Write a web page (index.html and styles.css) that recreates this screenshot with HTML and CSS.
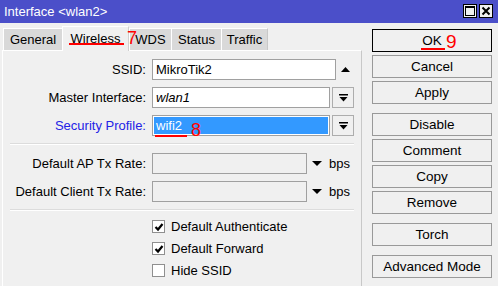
FILE: index.html
```html
<!DOCTYPE html>
<html>
<head>
<meta charset="utf-8">
<link rel="stylesheet" href="styles.css">
</head>
<body>
<div class="window">
  <div class="titlebar">
    <span class="title">Interface &lt;wlan2&gt;</span>
    <div class="winbtns">
      <span class="wbtn"><svg width="12" height="12" viewBox="0 0 12 12"><rect x="1.5" y="1.5" width="9" height="9" fill="none" stroke="#000" stroke-width="1"/><rect x="1" y="1" width="10" height="2" fill="#000"/></svg></span>
      <span class="wbtn"><svg width="12" height="12" viewBox="0 0 12 12"><path d="M2.5 2.5 L9.5 9.5 M9.5 2.5 L2.5 9.5" stroke="#000" stroke-width="2"/></svg></span>
    </div>
  </div>
  <div class="main">
    <div class="left">
      <div class="tabs">
        <div class="tab t-general">General</div>
        <div class="tab active t-wireless">Wireless</div>
        <div class="tab t-wds">WDS</div>
        <div class="tab t-status">Status</div>
        <div class="tab t-traffic">Traffic</div>
      </div>
      <div class="panel">
        <div class="row">
          <span class="lbl">SSID:</span>
          <div class="field f-ssid">MikroTik2</div>
          <svg class="uparrow" width="9" height="5" viewBox="0 0 9 5"><polygon points="0,5 9,5 4.5,0" fill="#000"/></svg>
        </div>
        <div class="row">
          <span class="lbl">Master Interface:</span>
          <div class="field f-drop"><i>wlan1</i></div>
          <span class="dropbtn"><svg width="9" height="8" viewBox="0 0 9 8"><rect x="0" y="0" width="9" height="1.5" fill="#000"/><polygon points="0.5,3 8.5,3 4.5,7.5" fill="#000"/></svg></span>
        </div>
        <div class="row">
          <span class="lbl blue">Security Profile:</span>
          <div class="field f-drop sel"><span class="selfill">wifi2</span></div>
          <span class="dropbtn"><svg width="9" height="8" viewBox="0 0 9 8"><rect x="0" y="0" width="9" height="1.5" fill="#000"/><polygon points="0.5,3 8.5,3 4.5,7.5" fill="#000"/></svg></span>
        </div>
        <div class="sep"></div>
        <div class="row">
          <span class="lbl">Default AP Tx Rate:</span>
          <div class="field f-rate disabled"></div>
          <svg class="downarrow" width="10" height="5" viewBox="0 0 10 5"><polygon points="0,0 10,0 5,5" fill="#000"/></svg>
          <span class="unit">bps</span>
        </div>
        <div class="row">
          <span class="lbl">Default Client Tx Rate:</span>
          <div class="field f-rate disabled"></div>
          <svg class="downarrow" width="10" height="5" viewBox="0 0 10 5"><polygon points="0,0 10,0 5,5" fill="#000"/></svg>
          <span class="unit">bps</span>
        </div>
        <div class="sep sep2"></div>
        <div class="checks">
          <div class="chk"><span class="box"><svg width="10" height="10" viewBox="0 0 10 10"><path d="M1.5 5 L4 7.5 L8.5 2" fill="none" stroke="#000" stroke-width="2.2"/></svg></span>Default Authenticate</div>
          <div class="chk"><span class="box"><svg width="10" height="10" viewBox="0 0 10 10"><path d="M1.5 5 L4 7.5 L8.5 2" fill="none" stroke="#000" stroke-width="2.2"/></svg></span>Default Forward</div>
          <div class="chk"><span class="box"></span>Hide SSID</div>
        </div>
      </div>
    </div>
    <div class="buttons">
      <div class="group">
        <div class="btn default">OK</div>
        <div class="btn">Cancel</div>
        <div class="btn">Apply</div>
      </div>
      <div class="group">
        <div class="btn">Disable</div>
        <div class="btn">Comment</div>
        <div class="btn">Copy</div>
        <div class="btn">Remove</div>
      </div>
      <div class="group">
        <div class="btn">Torch</div>
      </div>
      <div class="group">
        <div class="btn">Advanced Mode</div>
      </div>
    </div>
  </div>
  <span class="anno n7">7</span>
  <span class="uline u7"></span>
  <span class="anno n8">8</span>
  <span class="uline u8"></span>
  <span class="anno n9">9</span>
  <span class="uline u9"></span>
</div>
</body>
</html>
```

FILE: styles.css
```css
html, body {
  margin: 0;
  padding: 0;
}
body {
  width: 498px;
  height: 286px;
  overflow: hidden;
  background: #f0f0f0;
  font-family: "Liberation Sans", Arial, sans-serif;
  font-size: 13px;
  color: #000;
}
.window {
  position: relative;
  width: 498px;
  height: 286px;
  background: #f0f0f0;
}
.titlebar {
  height: 23px;
  background: #4b4fc9;
  display: flex;
  align-items: center;
  justify-content: space-between;
}
.title {
  color: #fff;
  font-size: 13px;
  padding-left: 4px;
}
.winbtns {
  display: flex;
  gap: 2px;
  padding-right: 5px;
  margin-top: -1px;
}
.wbtn {
  width: 12px;
  height: 12px;
  border: 1px solid #000;
  background: #f0f0f0;
  display: flex;
  align-items: center;
  justify-content: center;
}
.main {
  display: flex;
  height: 263px;
}
.left {
  margin-left: 2px;
  width: 360px;
  display: flex;
  flex-direction: column;
}
.tabs {
  display: flex;
  padding-left: 1px;
  margin-top: 3px;
  height: 24px;
  align-items: flex-end;
  position: relative;
  z-index: 2;
}
.tab {
  height: 22px;
  box-sizing: border-box;
  background: #d9d9d9;
  border-left: 1px solid #fff;
  border-top: 1px solid #fff;
  text-align: center;
  line-height: 21px;
  font-size: 13px;
}
.tab.active {
  height: 25px;
  background: #f0f0f0;
  border-right: 1px solid #d0d0d0;
  margin-bottom: -1px;
  line-height: 23px;
}
.t-general { width: 59px; }
.t-wireless { width: 67px; }
.t-wds { width: 42px; }
.t-status { width: 50px; }
.t-traffic { width: 47px; border-right: 1px solid #c8c8c8; }
.panel {
  flex: 1;
  border-left: 1px solid #fff;
  border-top: 1px solid #fff;
  border-right: 1px solid #c8c8c8;
  padding-top: 8px;
}
.row {
  display: flex;
  align-items: center;
  height: 21px;
  margin-bottom: 7px;
}
.lbl {
  width: 143px;
  text-align: right;
  margin-right: 6px;
  white-space: nowrap;
}
.lbl.blue {
  color: #2323e6;
}
.field {
  box-sizing: border-box;
  height: 21px;
  border: 1px solid #a0a0a0;
  background: #fff;
  padding-left: 3px;
  line-height: 19px;
  white-space: nowrap;
}
.f-ssid { width: 184px; }
.f-drop { width: 178px; }
.f-rate { width: 155px; }
.field.disabled { background: #f0f0f0; }
.field.sel {
  padding: 1px;
}
.selfill {
  display: block;
  height: 17px;
  background: #3399ff;
  color: #fff;
  line-height: 17px;
  padding-left: 2px;
}
.uparrow {
  margin-left: 5px;
  margin-top: -1px;
}
.dropbtn {
  box-sizing: border-box;
  width: 22px;
  height: 21px;
  margin-left: 2px;
  border: 1px solid #adadad;
  background: #f0f0f0;
  display: flex;
  align-items: center;
  justify-content: center;
}
.downarrow {
  margin-left: 5px;
}
.unit {
  margin-left: 7px;
}
.sep {
  height: 1px;
  background: #dcdcdc;
  border-bottom: 1px solid #fff;
  margin: 1px 7px 8px 7px;
}
.sep2 {
  margin-top: 2px;
  margin-bottom: 9px;
}
.checks {
  padding-left: 149px;
  display: flex;
  flex-direction: column;
  gap: 9px;
}
.chk {
  display: flex;
  align-items: center;
  height: 13px;
  white-space: nowrap;
}
.box {
  box-sizing: border-box;
  width: 13px;
  height: 13px;
  border: 1px solid #8f8f8f;
  background: #fff;
  margin-right: 6px;
  display: flex;
  align-items: center;
  justify-content: center;
}
.buttons {
  margin-left: 10px;
  width: 120px;
  padding-top: 6px;
  display: flex;
  flex-direction: column;
  gap: 9px;
}
.group {
  display: flex;
  flex-direction: column;
  gap: 3px;
}
.btn {
  box-sizing: border-box;
  height: 23px;
  border: 1px solid #999;
  background: #f0f0f0;
  text-align: center;
  line-height: 21px;
  font-size: 13.5px;
}
.btn.default {
  border-color: #000;
}
.anno {
  position: absolute;
  z-index: 5;
  color: #ff0000;
  font-family: "Liberation Sans", Arial, sans-serif;
  font-size: 18px;
  line-height: 18px;
}
.n7 { left: 127px; top: 29px; }
.n8 { left: 191px; top: 121px; }
.n9 { left: 446px; top: 33px; font-size: 19px; }
.uline {
  position: absolute;
  z-index: 5;
  height: 2px;
  background: #ff0000;
}
.u7 { left: 69px; top: 43px; width: 55px; }
.u8 { left: 155px; top: 135px; width: 32px; }
.u9 { left: 421px; top: 48px; width: 24px; }
```
